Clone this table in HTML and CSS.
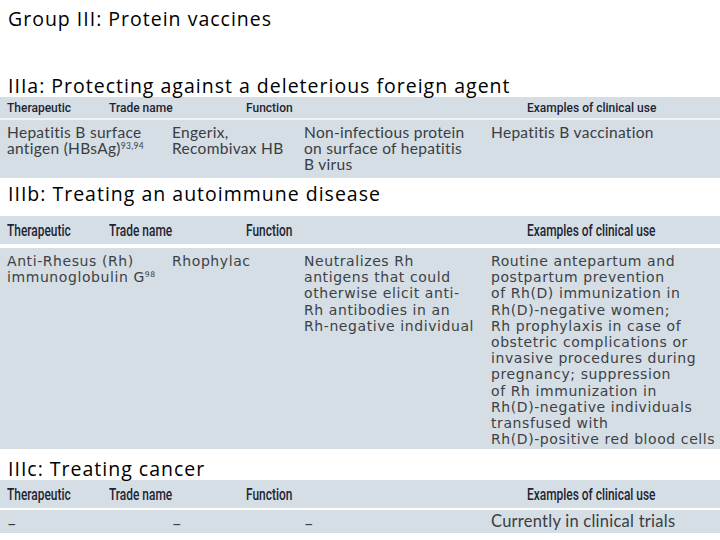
FILE: index.html
```html
<!DOCTYPE html>
<html lang="en">
<head>
<meta charset="utf-8">
<title>Group III: Protein vaccines</title>
<link rel="stylesheet" href="styles.css">
</head>
<body>
<h1 class="title title-main">Group III: Protein vaccines</h1>

<h2 class="title title-a">IIIa: Protecting against a deleterious foreign agent</h2>
<section class="tbl tbl-a">
  <div class="thead">
    <span>Therapeutic</span><span>Trade name</span><span>Function</span><span>Examples of clinical use</span>
  </div>
  <div class="tbody">
    <div>Hepatitis B surface<br>antigen (HBsAg)<sup>93,94</sup></div>
    <div>Engerix,<br>Recombivax HB</div>
    <div>Non-infectious protein<br>on surface of hepatitis<br>B virus</div>
    <div>Hepatitis B vaccination</div>
  </div>
</section>

<h2 class="title title-b">IIIb: Treating an autoimmune disease</h2>
<section class="tbl tbl-b">
  <div class="thead">
    <span>Therapeutic</span><span>Trade name</span><span>Function</span><span>Examples of clinical use</span>
  </div>
  <div class="tbody">
    <div>Anti-Rhesus (Rh)<br>immunoglobulin G<sup>98</sup></div>
    <div>Rhophylac</div>
    <div>Neutralizes Rh<br>antigens that could<br>otherwise elicit anti-<br>Rh antibodies in an<br>Rh-negative individual</div>
    <div>Routine antepartum and<br>postpartum prevention<br>of Rh(D) immunization in<br>Rh(D)-negative women;<br>Rh prophylaxis in case of<br>obstetric complications or<br>invasive procedures during<br>pregnancy; suppression<br>of Rh immunization in<br>Rh(D)-negative individuals<br>transfused with<br>Rh(D)-positive red blood cells</div>
  </div>
</section>

<h2 class="title title-c">IIIc: Treating cancer</h2>
<section class="tbl tbl-c">
  <div class="thead">
    <span>Therapeutic</span><span>Trade name</span><span>Function</span><span>Examples of clinical use</span>
  </div>
  <div class="tbody">
    <div class="dash">–</div>
    <div class="dash">–</div>
    <div class="dash">–</div>
    <div>Currently in clinical trials</div>
  </div>
</section>
</body>
</html>
```
FILE: styles.css
```css
html, body {
  margin: 0;
  padding: 0;
  background: #ffffff;
}

body {
  width: 720px;
  height: 540px;
  overflow: hidden;
}

.title {
  margin: 0;
  padding-left: 8px;
  font-family: "Open Sans", "Lato", sans-serif;
  font-weight: normal;
  font-size: 19.5px;
  letter-spacing: 1px;
  line-height: 22px;
  color: #000000;
  white-space: nowrap;
}

.title-main { margin-top: 8px; }
.title-a { margin-top: 45px; }
.title-b { margin-top: 5px; }
.title-c { margin-top: 9px; }

.tbl {
  background: #d4dee4;
  color: #3a3d42;
}

.thead {
  display: grid;
  grid-template-columns: 102px 137px 281px 1fr;
  padding-left: 7px;
  color: #1f2433;
  white-space: nowrap;
}

.tbody {
  display: grid;
  grid-template-columns: 165px 132px 187px 1fr;
  padding-left: 7px;
  font-family: "Lato", "Open Sans", sans-serif;
  white-space: nowrap;
}

.tbody sup {
  font-size: 0.55em;
  line-height: 0;
  vertical-align: 0.6em;
}

/* table a */
.tbl-a .thead {
  height: 21px;
  font-family: "Roboto", "Liberation Sans", sans-serif;
  font-weight: 500;
  font-size: 12px;
  line-height: 22px;
  border-bottom: 2px solid #eef3f5;
}

.tbl-a .tbody {
  height: 58px;
  box-sizing: border-box;
  padding-top: 4px;
  font-size: 15.5px;
  letter-spacing: 0.3px;
  line-height: 16px;
}

/* table b */
.tbl-b {
  margin-top: 11px;
}

.tbl-b .thead,
.tbl-c .thead {
  height: 28px;
  font-family: "Roboto", "Liberation Sans", sans-serif;
  font-weight: 500;
  font-size: 16px;
  line-height: 29px;
  border-bottom: 4px solid #ffffff;
}

.tbl-b .thead span,
.tbl-c .thead span {
  transform: scaleX(0.745);
  transform-origin: left center;
}

.tbl-b .tbody {
  height: 201px;
  box-sizing: border-box;
  padding-top: 5px;
  font-family: "DejaVu Sans", "Lato", sans-serif;
  font-size: 14px;
  letter-spacing: 0.58px;
  line-height: 16.2px;
  color: #3e4146;
}

/* table c */
.tbl-c .thead {
  border-bottom-width: 2px;
}

.tbl-c .tbody {
  height: 23px;
  font-size: 16.5px;
  letter-spacing: 0.25px;
  line-height: 23px;
}

.tbl-c .dash {
  padding-top: 3px;
}
```
